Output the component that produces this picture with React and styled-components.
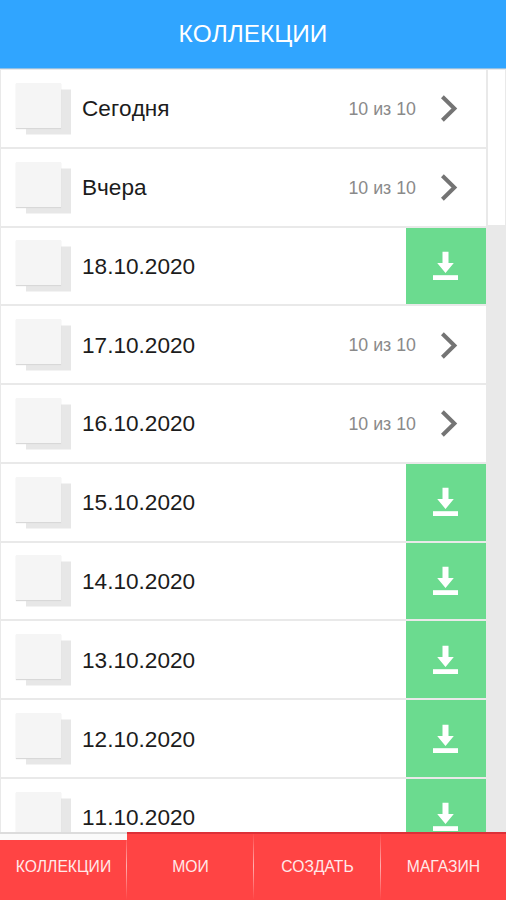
import React, { useState } from "react";
import styled, { createGlobalStyle } from "styled-components";

const collections = [
  { title: "Сегодня", progress: "10 из 10" },
  { title: "Вчера", progress: "10 из 10" },
  { title: "18.10.2020" },
  { title: "17.10.2020", progress: "10 из 10" },
  { title: "16.10.2020", progress: "10 из 10" },
  { title: "15.10.2020" },
  { title: "14.10.2020" },
  { title: "13.10.2020" },
  { title: "12.10.2020" },
  { title: "11.10.2020" },
];

const tabs = ["КОЛЛЕКЦИИ", "МОИ", "СОЗДАТЬ", "МАГАЗИН"];

const ArrowIcon = () => (
  <svg width="18" height="28" viewBox="0 0 18 28" fill="none">
    <path d="M2.4 2.7L14.4 14.5L2.4 26.3" stroke="#747474" strokeWidth="4" />
  </svg>
);

const DownloadIcon = () => (
  <svg width="26" height="30" viewBox="0 0 26 30" fill="#ffffff">
    <path d="M9.5 0.8H15.5V12H20.8L12.5 22L4.2 12H9.5Z" />
    <rect x="0" y="24.2" width="25" height="4.8" />
  </svg>
);

const CollectionRow = ({ title, progress }) => (
  <Row>
    <Thumb />
    <RowTitle>{title}</RowTitle>
    {progress ? (
      <Progress>
        <span>{progress}</span>
        <ArrowIcon />
      </Progress>
    ) : (
      <DownloadButton aria-label="Скачать">
        <DownloadIcon />
      </DownloadButton>
    )}
  </Row>
);

const App = () => {
  const [activeTab, setActiveTab] = useState(0);

  return (
    <Screen>
      <GlobalStyle />
      <Header>КОЛЛЕКЦИИ</Header>
      <Content>
        <List>
          {collections.map((item) => (
            <CollectionRow key={item.title} {...item} />
          ))}
        </List>
        <ScrollTrack>
          <ScrollThumb />
        </ScrollTrack>
      </Content>
      <TabBar>
        {tabs.map((tab, index) => (
          <Tab
            key={tab}
            $active={index === activeTab}
            onClick={() => {
              setActiveTab(index);
            }}
          >
            <TabMarker $active={index === activeTab} />
            <TabLabel>{tab}</TabLabel>
          </Tab>
        ))}
      </TabBar>
    </Screen>
  );
};

const GlobalStyle = createGlobalStyle`
  * {
    box-sizing: border-box;
  }

  body {
    margin: 0;
    background: #ffffff;
    font-family: "Liberation Sans", Arial, sans-serif;
    font-kerning: none;
  }

  button {
    border: none;
    padding: 0;
    font-family: inherit;
    cursor: pointer;
  }
`;

const Screen = styled.div`
  display: flex;
  flex-direction: column;
  width: 506px;
  height: 900px;
  overflow: hidden;
`;

const Header = styled.header`
  flex: none;
  display: flex;
  align-items: center;
  justify-content: center;
  height: 69px;
  border-bottom: 1px solid #8fc0e6;
  background: #30a5ff;
  color: #ffffff;
  font-size: 24.4px;
`;

const Content = styled.main`
  flex: 1;
  display: flex;
  min-height: 0;
  overflow: hidden;
  background: #e8e8e8;
`;

const List = styled.div`
  flex: none;
  display: flex;
  flex-direction: column;
  gap: 2px;
  width: 486px;
  padding: 1px 0 0 1px;
  background: #e9e9e9;
`;

const Row = styled.div`
  flex: none;
  display: flex;
  align-items: center;
  height: 76.77px;
  padding-left: 15px;
  background: #ffffff;
`;

const Thumb = styled.div`
  flex: none;
  width: 45px;
  height: 45px;
  margin-bottom: 6px;
  background: #f5f5f5;
  box-shadow: 0 1px 1px #d8d8d8, 10px 6.5px 0 #e7e7e7;
`;

const RowTitle = styled.div`
  flex: 1;
  margin-left: 21px;
  padding-top: 2px;
  color: #1c1c1c;
  font-size: 22.6px;
`;

const Progress = styled.div`
  display: flex;
  align-items: center;
  gap: 24px;
  padding-right: 28px;
  color: #8a8a8a;
  font-size: 17.8px;

  span {
    padding-top: 2px;
  }
`;

const DownloadButton = styled.button`
  display: flex;
  align-items: center;
  justify-content: center;
  align-self: stretch;
  width: 80px;
  background: #6bdb8f;
`;

const ScrollTrack = styled.div`
  flex: 1;
  padding: 1px 1px 0 2px;
  background: #e9e9e9;
`;

const ScrollThumb = styled.div`
  height: 155px;
  background: #ffffff;
`;

const TabBar = styled.nav`
  flex: none;
  display: grid;
  grid-template-columns: repeat(3, 127px) 1fr;
  height: 68px;
  background: #ff4444;
`;

const Tab = styled.button`
  display: flex;
  flex-direction: column;
  background: linear-gradient(to bottom, #ff444400, #ffb0b0 50%, #ff444400)
    right / 1px 100% no-repeat #ff4444;
  color: #ffe9e9;
  font-size: 15.7px;

  &:last-child {
    background: #ff4444;
  }
`;

const TabMarker = styled.div`
  width: 100%;
  height: ${(props) => (props.$active ? "8px" : "2px")};
  border-top: ${(props) => (props.$active ? "2px solid #dcdcdc" : "none")};
  background: ${(props) => (props.$active ? "#fafafa" : "#dc3038")};
`;

const TabLabel = styled.span`
  margin: auto auto 24px;
  line-height: 18px;
`;

export default App;
